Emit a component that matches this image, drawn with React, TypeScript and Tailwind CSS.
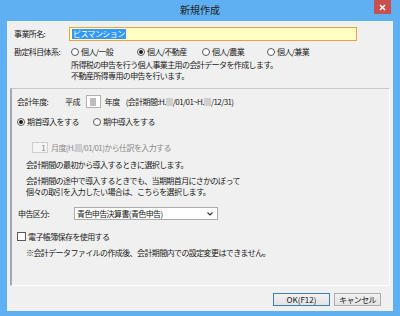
import React from "react"

function Radio({ on, label, w }: { on?: boolean; label: string; w?: string }) {
  return (
    <div className={`flex items-center gap-[2px] ${w ?? ""}`}>
      <span className="w-[8px] h-[8px] rounded-full border border-[#5a5a5a] bg-white flex items-center justify-center shrink-0">
        {on && <span className="w-[4px] h-[4px] rounded-full bg-[#1a1a1a]" />}
      </span>
      <span>{label}</span>
    </div>
  )
}

function Blur() {
  return <span className="inline-block w-[7px] h-[8px] bg-[#cfcfcf] align-middle" />
}

export default function App() {
  return (
    <div className="w-[400px] h-[316px] bg-[#5eb0f3] flex flex-col font-['Noto_Sans_CJK_JP','Noto_Sans_CJK_SC',sans-serif] text-[8px] tracking-[-0.6px] text-[#1a1a1a] overflow-hidden">
      {/* title bar */}
      <div className="relative h-[21px] flex items-center justify-center shrink-0">
        <span className="text-[10px] tracking-normal text-[#222] -mt-[3px]">新規作成</span>
        <div className="absolute top-0 right-[9px] w-[17px] h-[14px] bg-[#c9504f] flex items-center justify-center">
          <svg width="7" height="7" viewBox="0 0 7 7">
            <path d="M1 1L6 6M6 1L1 6" stroke="#fff" strokeWidth="1.5" />
          </svg>
        </div>
      </div>

      {/* client */}
      <div className="flex-1 mx-[7px] mb-[5px] bg-[#f0f0f0] flex flex-col">
        {/* 事業所名 */}
        <div className="mt-[6px] ml-[7px] h-[14px] flex items-center">
          <span className="w-[55px]">事業所名:</span>
          <div className="w-[288px] h-[14px] border border-[#e8a33c] bg-[#ffffc4] flex items-center pl-[2px]">
            <span className="bg-[#3399ff] text-white leading-[10px] px-[1px]">ビスマンション</span>
          </div>
        </div>

        {/* 勘定科目体系 */}
        <div className="mt-[5px] ml-[7px] h-[12px] flex items-center">
          <span className="w-[57px]">勘定科目体系:</span>
          <Radio label="個人/一般" w="w-[66px]" />
          <Radio on label="個人/不動産" w="w-[65px]" />
          <Radio label="個人/農業" w="w-[65px]" />
          <Radio label="個人/兼業" />
        </div>

        <div className="ml-[64px] mt-[1px] leading-[11px]">
          <div>所得税の申告を行う個人事業主用の会計データを作成します。</div>
          <div>不動産所得専用の申告を行います。</div>
        </div>

        {/* group */}
        <div className="mt-[7px] ml-[3px] w-[380px] h-[198px] border-t border-t-[#c8c8c8] border-l-2 border-l-[#a8a8a8] border-r border-r-white border-b border-b-white flex flex-col pl-[5px]">
          <div className="mt-[6px] h-[13px] flex items-center">
            <span className="w-[48px]">会計年度:</span>
            <span>平成</span>
            <span className="ml-[6px] w-[15px] h-[13px] bg-white border border-[#b0b0b0] flex items-center justify-center">
              <span className="w-[6px] h-[8px] bg-[#bdbdbd]" />
            </span>
            <span className="ml-[4px]">年度</span>
            <span className="ml-[6px]">
              (会計期間:H.<Blur />/01/01~H.<Blur />/12/31)
            </span>
          </div>

          <div className="mt-[8px] h-[12px] flex items-center">
            <Radio on label="期首導入をする" w="w-[76px]" />
            <Radio label="期中導入をする" />
          </div>

          <div className="mt-[14px] ml-[15px] h-[11px] flex items-center text-[#8a8a8a]">
            <span className="w-[16px] h-[11px] border border-[#cfcfcf] bg-[#f4f4f4] flex items-center justify-end pr-[2px]">1</span>
            <span className="ml-[3px]">
              月度(H.<Blur />/01/01)から仕訳を入力する
            </span>
          </div>

          <div className="mt-[6px] ml-[9px] leading-[11px]">
            <div>会計期間の最初から導入するときに選択します。</div>
            <div className="mt-[5px]">会計期間の途中で導入するときでも、当期期首月にさかのぼって</div>
            <div>個々の取引を入力したい場合は、こちらを選択します。</div>
          </div>

          <div className="mt-[10px] ml-[1px] h-[13px] flex items-center">
            <span className="w-[56px]">申告区分:</span>
            <div className="w-[144px] h-[13px] bg-white border border-[#acacac] flex items-center pl-[2px] pr-[4px]">
              <span className="flex-1">青色申告決算書(青色申告)</span>
              <svg width="6" height="4" viewBox="0 0 6 4">
                <path d="M0.5 0.5L3 3L5.5 0.5" stroke="#333" strokeWidth="1.2" fill="none" />
              </svg>
            </div>
          </div>

          <div className="mt-[11px] h-[11px] flex items-center">
            <span className="w-[9px] h-[9px] border border-[#5a5a5a] bg-white shrink-0" />
            <span className="ml-[2px]">電子帳簿保存を使用する</span>
          </div>

          <div className="mt-[5px] ml-[9px] leading-[11px]">
            ※会計データファイルの作成後、会計期間内での設定変更はできません。
          </div>
        </div>

        {/* buttons */}
        <div className="mt-[7px] mr-[12px] flex justify-end gap-[4px]">
          <button className="w-[57px] h-[13px] border border-[#3c7fb1] bg-gradient-to-b from-[#f2f2f2] to-[#e3e3e3] flex items-center justify-center leading-none tracking-normal">
            OK(F12)
          </button>
          <button className="w-[47px] h-[13px] border border-[#acacac] bg-gradient-to-b from-[#f2f2f2] to-[#e3e3e3] flex items-center justify-center leading-none">
            キャンセル
          </button>
        </div>
      </div>
    </div>
  )
}
